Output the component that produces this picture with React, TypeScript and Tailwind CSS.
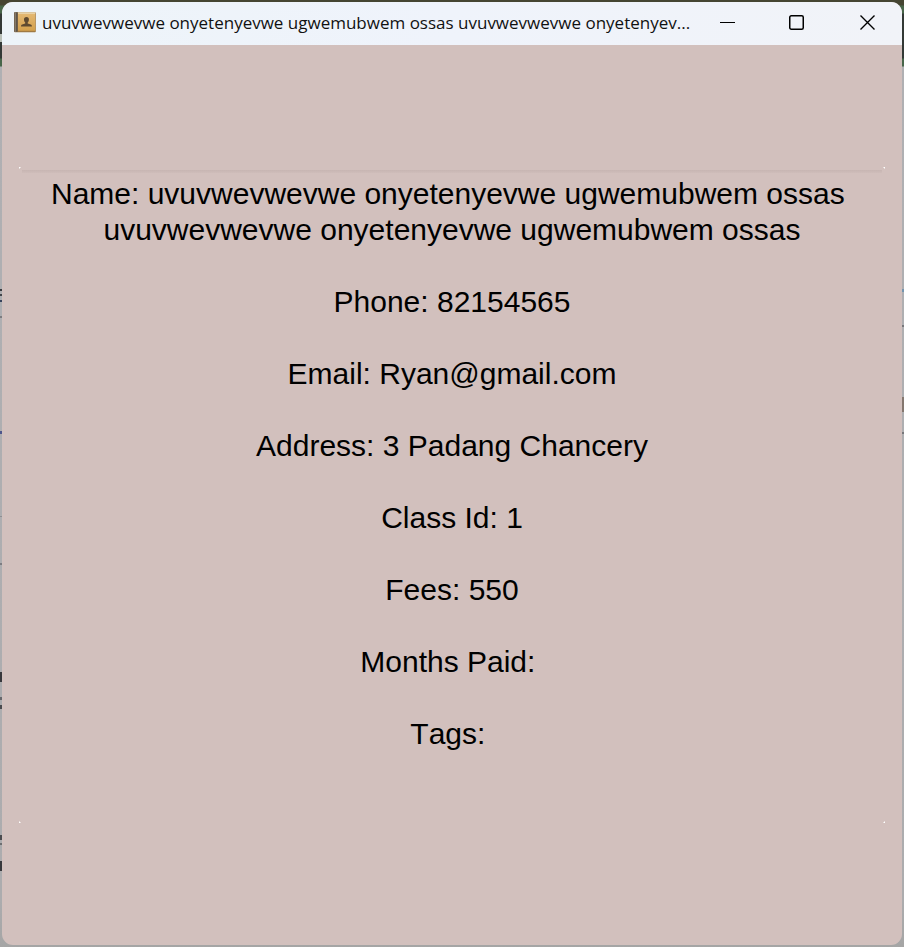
const fields = [
  'Phone: 82154565',
  'Email: Ryan@gmail.com',
  'Address: 3 Padang Chancery',
  'Class Id: 1',
  'Fees: 550',
  'Months Paid: ',
  'Tags: ',
];

// Fragments of the page behind the window that show along its edges.
const leftMarks = [
  { top: 34, height: 8, color: '#b9c0b8' },
  { top: 289, height: 2, color: '#393b40' },
  { top: 294, height: 2, color: '#44464b' },
  { top: 300, height: 2, color: '#38435c' },
  { top: 316, height: 2, color: '#7c7c80' },
  { top: 431, height: 3, color: '#4e568c' },
  { top: 516, height: 1, color: '#8f8f93' },
  { top: 563, height: 2, color: '#7d7d82' },
  { top: 672, height: 10, color: '#37383c' },
  { top: 697, height: 3, color: '#66686c' },
  { top: 705, height: 4, color: '#4a4b4f' },
  { top: 835, height: 5, color: '#4b4c50' },
  { top: 843, height: 2, color: '#6d6f72' },
  { top: 861, height: 10, color: '#37383c' },
];

const rightMarks = [
  { top: 289, height: 3, color: '#7395b0' },
  { top: 325, height: 2, color: '#77777b' },
  { top: 397, height: 15, color: '#84776f' },
  { top: 432, height: 2, color: '#77777b' },
];

function BookIcon() {
  return (
    <svg width="22" height="22" viewBox="0 0 22 22" className="shrink-0">
      <defs>
        <linearGradient id="cover" x1="0" y1="0" x2="0" y2="1">
          <stop offset="0" stopColor="#e3b872" />
          <stop offset="1" stopColor="#d3a04c" />
        </linearGradient>
      </defs>
      <rect x="0.2" y="0.2" width="21.600" height="20" rx="0.800" fill="#a07a42" />
      <rect x="0.300" y="0.200" width="3.400" height="19.600" fill="#5d554b" />
      <rect x="1" y="0.200" width="1" height="19.600" fill="#857a69" />
      <rect x="4" y="0.400" width="17.200" height="1.500" fill="#f3e3bd" />
      <rect x="4" y="1.800" width="17.200" height="17" fill="url(#cover)" />
      <path
        d="M12.500 5c1.700 0 2.500 1.100 2.400 2.700c-.1 1.300-.6 2.200-1.200 2.800v.9l3 1c.9.3 1.200.8 1.200 2.200H7c0-1.400.3-1.900 1.200-2.200l3-1v-.9c-.6-.6-1.100-1.500-1.200-2.800C9.900 6.100 10.800 5 12.500 5z"
        fill="#5e4a30"
      />
    </svg>
  );
}

function TitleBar() {
  return (
    <header className="flex h-[43px] items-center bg-linear-to-r from-[#edf4f9] via-[#eff3fb] to-[#f1f3f8] pb-px pl-3">
      <BookIcon />
      <h1 className="ml-[6px] w-[660px] shrink-0 whitespace-nowrap pb-px font-['Open_Sans',sans-serif] text-[17px] leading-6 text-[#111]">
        uvuvwevwevwe onyetenyevwe ugwemubwem ossas uvuvwevwevwe onyetenyev...
      </h1>
      <div className="ml-[18px] flex items-center pb-[2px] text-black">
        <svg width="16" height="16" viewBox="0 0 16 16">
          <path d="M0 8.500H15" stroke="currentColor" strokeWidth="1" />
        </svg>
        <svg width="16" height="16" viewBox="0 0 16 16" fill="none" className="ml-[52px]">
          <rect x="1.750" y="1.750" width="13.500" height="13.500" rx="1.500" stroke="currentColor" strokeWidth="1.500" />
        </svg>
        <svg width="16" height="16" viewBox="0 0 16 16" fill="none" className="ml-[56px]">
          <path d="M0.500 1.500L14.500 15.500M14.500 1.500L0.500 15.500" stroke="currentColor" strokeWidth="1.400" />
        </svg>
      </div>
    </header>
  );
}

// The white corners left visible around the rounded panel.
function CornerDots({ bottom = false }: { bottom?: boolean }) {
  const points = bottom
    ? ['0,0 0,2 2,2', '2,0 2,2 0,2']
    : ['0,0 2,0 0,2', '0,0 2,0 2,2'];
  return (
    <div className="flex h-px justify-between">
      {points.map((p) => (
        <svg key={p} width="2" height="2" viewBox="0 0 2 2" className="shrink-0">
          <polygon points={p} fill="#ffffff" />
        </svg>
      ))}
    </div>
  );
}

export default function App() {
  return (
    <div className="relative h-[947px] w-[904px] overflow-hidden bg-[linear-gradient(to_bottom,#454532_0px,#454532_5px,#48664a_6px,#48664a_13px,#333936_14px,#333936_58px,#48664a_59px,#48664a_66px,#b0b0b3_67px,#acacae_900px,#a5a5a5_947px)] p-[2px]">
      {leftMarks.map((m) => (
        <span key={m.top} className="absolute left-0 w-[2px]" style={{ top: m.top, height: m.height, background: m.color }} />
      ))}
      {rightMarks.map((m) => (
        <span key={m.top} className="absolute right-0 w-[2px]" style={{ top: m.top, height: m.height, background: m.color }} />
      ))}
      <main className="h-[943px] overflow-hidden rounded-[11px] bg-[#d2c0bd]">
        <TitleBar />
        <section className="mx-[17px] mt-[122px] flex h-[655px] flex-col justify-between">
          <div>
            <CornerDots />
            <div className="mx-[3px] mt-[2px] h-[3px] bg-linear-to-b from-[#c7b5b2] to-[#cfbdba]" />
            <div className="mt-[3px] whitespace-pre text-center font-['Liberation_Sans',Arial,sans-serif] text-[30px] leading-9 text-black [font-kerning:none]">
              <p>{'Name: uvuvwevwevwe onyetenyevwe ugwemubwem ossas '}</p>
              <p>uvuvwevwevwe onyetenyevwe ugwemubwem ossas</p>
              {fields.map((f) => (
                <p key={f} className="mt-9">
                  {f}
                </p>
              ))}
            </div>
          </div>
          <CornerDots bottom />
        </section>
      </main>
    </div>
  );
}
